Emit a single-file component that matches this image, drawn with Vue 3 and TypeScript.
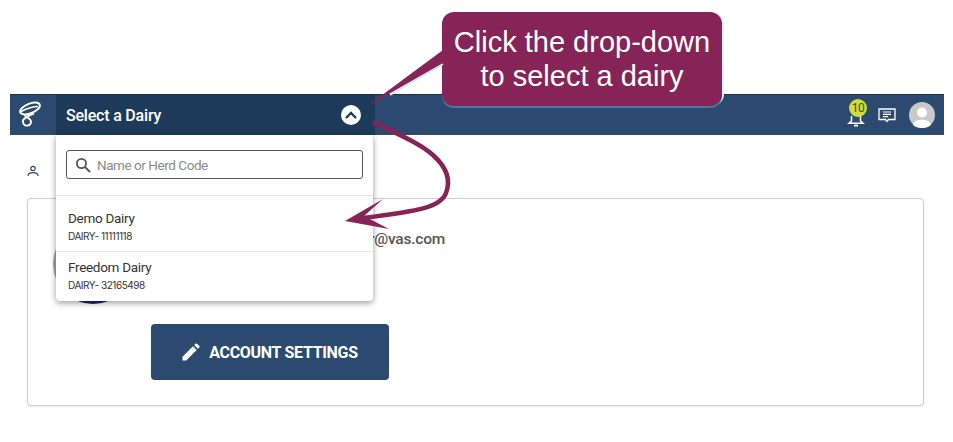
<script setup lang="ts">
const dairies = [
  { name: "Demo Dairy", code: "DAIRY- 11111118" },
  { name: "Freedom Dairy", code: "DAIRY- 32165498" },
];
</script>

<template>
  <div class="page">
    <header class="topbar">
      <div class="logo">
        <svg width="26" height="28" viewBox="0 0 26 28" fill="none" stroke="#fff" stroke-width="1.9">
          <ellipse cx="12" cy="7.5" rx="10.5" ry="4.8" transform="rotate(-22 12 7.5)" />
          <path d="M3 10.5 C8 8 14 5.5 20 5.5" stroke-width="1.5" />
          <path d="M16 12.5 C12 14 7 16 5.2 19 C3.8 22 6.5 25 9.5 24.6 C13 24 14 20.5 12 18.4 C10.5 17 8.5 16 6.5 14" />
        </svg>
      </div>
      <div class="picker">
        <span class="picker-label">Select a Dairy</span>
        <span class="chevron">
          <svg width="14" height="10" viewBox="0 0 14 10" fill="none" stroke="#1e3a5a" stroke-width="2.4">
            <path d="M2 8 L7 3 L12 8" />
          </svg>
        </span>
      </div>
      <div class="actions">
        <span class="bell">
          <svg width="18" height="20" viewBox="0 0 18 20" fill="none" stroke="#fff" stroke-width="1.5">
            <path d="M4.5 9 V14 L2 16.2 H16 L13.5 14 V9" />
            <path d="M7 18.6 H11" stroke-width="1.8" />
          </svg>
          <span class="badge">10</span>
        </span>
        <svg class="chat" width="18" height="15" viewBox="0 0 18 15" fill="none">
          <path d="M1 1 H17 V11.5 H10.5 L9 13.5 L7.5 11.5 H1 Z" stroke="#fff" stroke-width="1.3" />
          <path d="M5 4 H13 M5 6.3 H13 M5 8.6 H10" stroke="#fff" stroke-width="1.2" />
        </svg>
        <span class="user">
          <svg width="26" height="26" viewBox="0 0 26 26">
            <circle cx="13" cy="13" r="13" fill="#c9c9c9" />
            <circle cx="13" cy="10.5" r="5" fill="#fff" />
            <path d="M4 23 C5 16 21 16 22 23 C18 27 8 27 4 23 Z" fill="#fff" />
          </svg>
        </span>
      </div>

      <div class="menu">
        <div class="search-wrap">
          <div class="search">
            <svg width="16" height="16" viewBox="0 0 16 16" fill="none" stroke="#555" stroke-width="1.8">
              <circle cx="6.5" cy="6.5" r="4.6" />
              <path d="M10 10 L15 15" />
            </svg>
            <span>Name or Herd Code</span>
          </div>
        </div>
        <div v-for="d in dairies" :key="d.code" class="item">
          <div class="item-name">{{ d.name }}</div>
          <div class="item-code">{{ d.code }}</div>
        </div>
      </div>
    </header>

    <main class="content">
      <div class="crumb">
        <svg width="12" height="12" viewBox="0 0 12 12" fill="none" stroke="#2c4a70" stroke-width="1.2">
          <circle cx="6" cy="3.5" r="2.2" />
          <path d="M1 11 C1 6.5 11 6.5 11 11" />
        </svg>
      </div>
      <section class="card">
        <div class="profile">
          <div class="avatar"></div>
          <div class="details">
            <div class="email">demo.user@vas.com</div>
            <button class="settings" type="button">
              <svg width="18" height="18" viewBox="0 0 18 18" fill="#fff">
                <path d="M0.5 17.5 V13.8 L11 3.3 L14.7 7 L4.2 17.5 Z M12.2 2.1 L13.6 0.7 C14 0.3 14.6 0.3 15 0.7 L17.3 3 C17.7 3.4 17.7 4 17.3 4.4 L15.9 5.8 Z" />
              </svg>
              ACCOUNT SETTINGS
            </button>
          </div>
        </div>
      </section>
    </main>

    <div class="callout">Click the drop-down<br />to select a dairy</div>
    <svg class="arrows" width="953" height="442" viewBox="0 0 953 442">
      <path d="M443 64 L390 95" stroke="#cfe6f7" stroke-width="2" fill="none" />
      <path d="M443 50 L366 107 L443 63 Z" fill="#862457" />
      <path d="M373 122 C395 133 420 143 434 156 C447 168 451 180 446 193 C441 207 420 211 363 218" stroke="#862457" stroke-width="4.5" fill="none" />
      <path d="M345 221 L383 199 L364 216 L389 229 Z" fill="#862457" />
    </svg>
  </div>
</template>

<style scoped>
.page {
  position: relative;
  width: 953px;
  height: 442px;
  overflow: hidden;
  padding: 94px 9px 0 10px;
  box-sizing: border-box;
  background: #fff;
  font-family: Roboto, "Liberation Sans", sans-serif;
  color: #333;
}

.topbar {
  position: relative;
  display: flex;
  align-items: stretch;
  height: 41px;
  background: #2c4a70;
  border-top: 1px solid #1a2f49;
  box-sizing: border-box;
}
.logo {
  width: 46px;
  padding-right: 4px;
  box-sizing: border-box;
  display: flex;
  align-items: center;
  justify-content: center;
}
.picker {
  width: 319px;
  padding: 0 14px 0 10px;
  box-sizing: border-box;
  display: flex;
  align-items: center;
  justify-content: space-between;
  background: #1e3a5a;
}
.picker-label {
  color: #fff;
  font-size: 16px;
  font-weight: 500;
  letter-spacing: -0.2px;
}
.chevron {
  width: 20px;
  height: 20px;
  border-radius: 50%;
  background: #fff;
  display: flex;
  align-items: center;
  justify-content: center;
}
.actions {
  margin-left: auto;
  display: flex;
  align-items: center;
  gap: 14px;
  padding-right: 9px;
}
.bell {
  position: relative;
  display: flex;
  margin-right: -1px;
  padding-top: 3px;
}
.badge {
  position: absolute;
  top: -5px;
  left: 2px;
  width: 18px;
  height: 18px;
  border-radius: 50%;
  background: #cfdc3a;
  color: #4a4a20;
  font-size: 12px;
  line-height: 18px;
  text-align: center;
  letter-spacing: -0.5px;
}
.chat {
  margin-right: -1px;
}
.user {
  display: flex;
}

.menu {
  position: absolute;
  z-index: 2;
  left: 46px;
  top: 40px;
  width: 317px;
  background: #fff;
  border-radius: 0 0 4px 4px;
  box-shadow: 0 2px 6px rgba(0, 0, 0, 0.4);
}
.search-wrap {
  padding: 15px 10px 16px;
  border-bottom: 1px solid #e6e6e6;
}
.search {
  height: 29px;
  box-sizing: border-box;
  border: 1px solid #555;
  border-radius: 3px;
  display: flex;
  align-items: center;
  gap: 6px;
  padding-left: 8px;
  color: #8a8a8a;
  font-size: 13.5px;
  letter-spacing: -0.45px;
}
.item {
  height: 55px;
  box-sizing: border-box;
  padding: 14px 12px 0;
}
.item + .item {
  height: 50px;
  padding-top: 7px;
  border-top: 1px solid #e6e6e6;
}
.item-name {
  font-size: 13.5px;
  line-height: 16px;
  color: #333;
  letter-spacing: -0.3px;
}
.item-code {
  font-family: Inter, Roboto, sans-serif;
  font-size: 10px;
  line-height: 13px;
  margin-top: 4px;
  color: #333;
  letter-spacing: -0.45px;
}

.content {
  padding: 28px 20px 0 17px;
}
.crumb {
  height: 35px;
  display: flex;
  align-items: flex-start;
  padding-top: 2px;
  box-sizing: border-box;
}
.card {
  height: 208px;
  box-sizing: border-box;
  border: 1px solid #ccc;
  border-radius: 4px;
  box-shadow: 0 1px 2px rgba(0, 0, 0, 0.08);
  padding: 25px 0 0 25px;
}
.profile {
  display: flex;
  gap: 18px;
}
.avatar {
  width: 80px;
  height: 80px;
  box-sizing: border-box;
  border-radius: 50%;
  background: #fff;
  border: 3px solid #a5a5a5;
  border-bottom-color: #1a237e;
  flex: none;
}
.details {
  padding-top: 5px;
}
.email {
  margin-left: 151px;
  font-size: 15.5px;
  font-weight: 500;
  color: #555;
  line-height: 20px;
  letter-spacing: -0.2px;
  white-space: nowrap;
}
.settings {
  margin-top: 75px;
  width: 238px;
  height: 56px;
  border: 0;
  border-radius: 4px;
  background: #2c4a70;
  color: #fff;
  font-family: inherit;
  font-size: 16px;
  font-weight: 700;
  letter-spacing: -0.3px;
  display: flex;
  align-items: center;
  justify-content: center;
  gap: 9px;
}

.callout {
  position: absolute;
  z-index: 3;
  left: 442px;
  top: 12px;
  width: 280px;
  height: 94px;
  box-sizing: border-box;
  padding-top: 13px;
  border-radius: 12px;
  background: #862457;
  box-shadow: 0 2px 0 #4a76a8, 2px 0 0 #e3eff9;
  color: #fff;
  font-family: "Liberation Sans", Arial, sans-serif;
  font-size: 29px;
  line-height: 34px;
  text-align: center;
}
.arrows {
  position: absolute;
  z-index: 4;
  left: 0;
  top: 0;
  pointer-events: none;
}
</style>
